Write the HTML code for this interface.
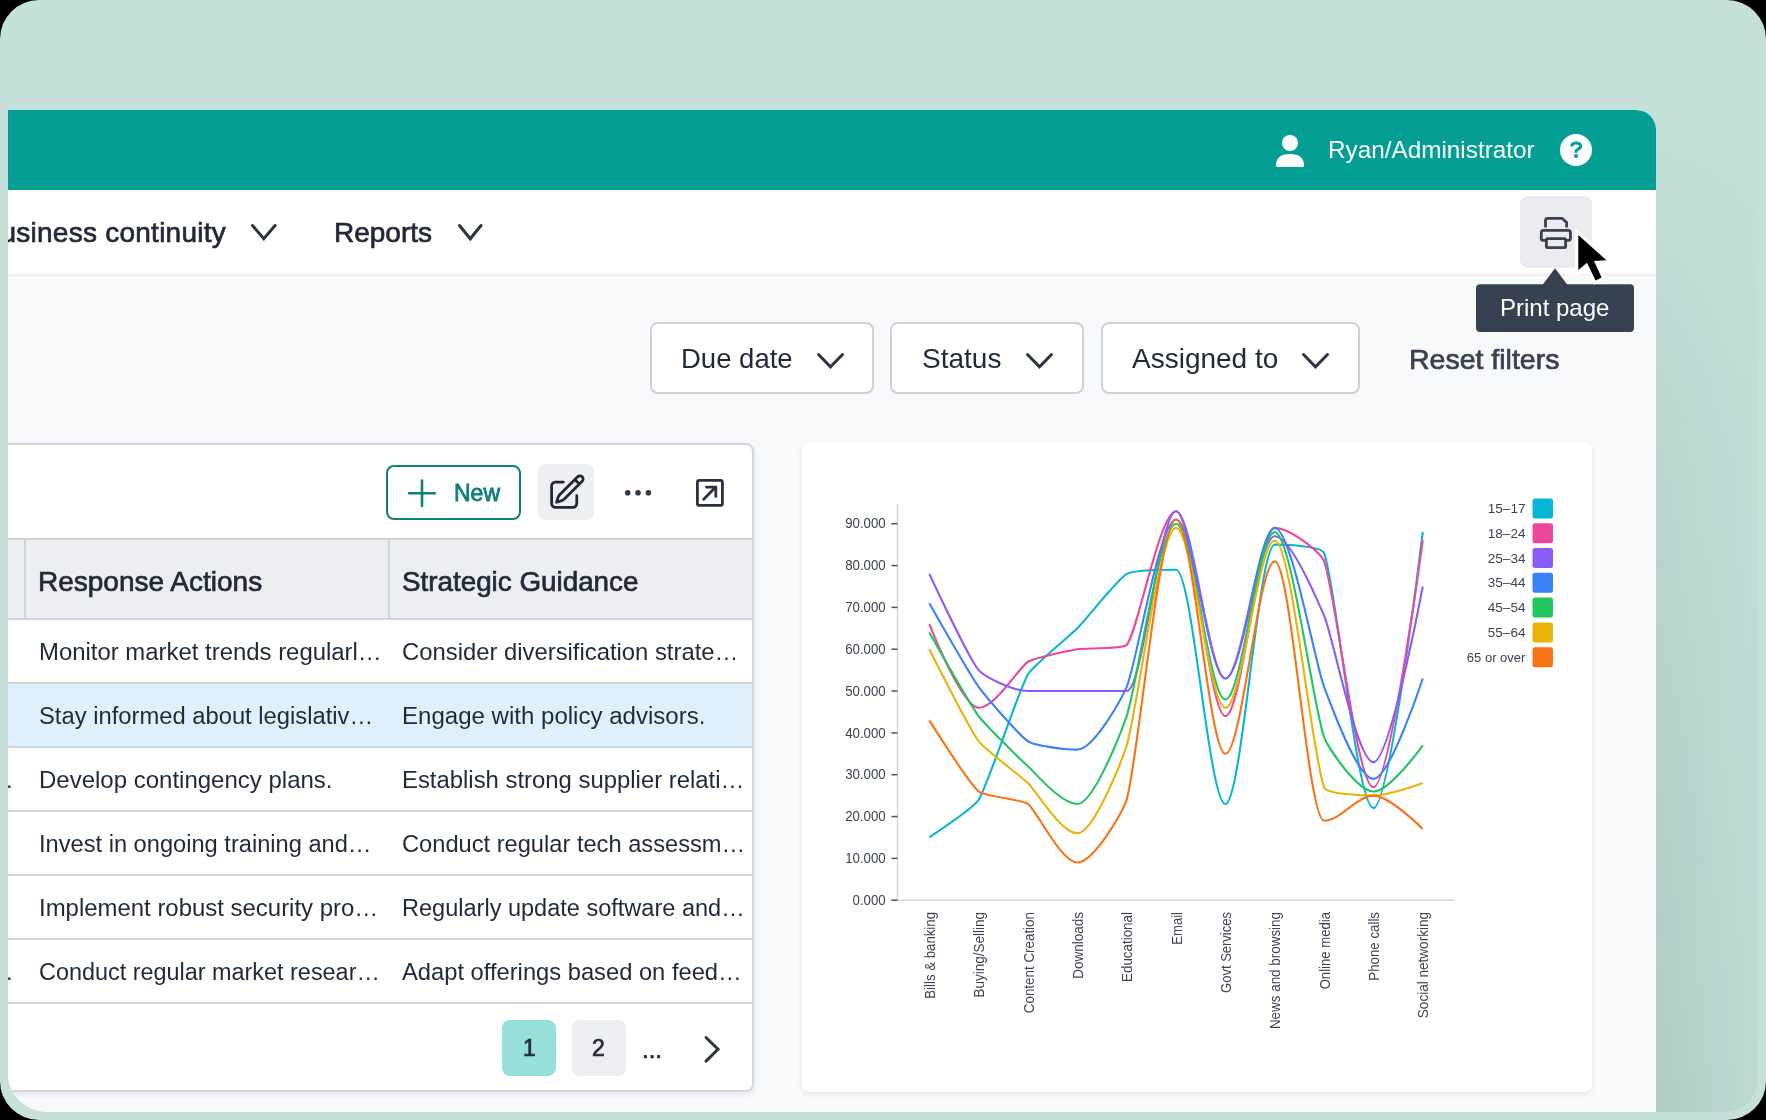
<!DOCTYPE html>
<html><head><meta charset="utf-8"><style>
html,body{margin:0;padding:0;background:#000;width:1766px;height:1120px;overflow:hidden}
.frame{position:absolute;left:0;top:0;width:1766px;height:1120px;border-radius:39px;background:#c5e1da;overflow:hidden}
.shadow{position:absolute;left:1656px;top:110px;width:102px;height:1002px;border-bottom-right-radius:32px;background:linear-gradient(to right,rgba(10,40,30,0.10),rgba(10,40,30,0.035));-webkit-mask-image:linear-gradient(to bottom,rgba(0,0,0,0) 0%,rgba(0,0,0,0.55) 35%,#000 100%);mask-image:linear-gradient(to bottom,rgba(0,0,0,0) 0%,rgba(0,0,0,0.55) 35%,#000 100%)}
.app{position:absolute;left:0;top:0;width:1766px;height:1120px;clip-path:inset(110px 110px 8px 8px round 0 20px 0 38px);background:#f8f9fb}
.t{position:absolute;white-space:nowrap;font-family:"Liberation Sans", sans-serif;will-change:transform}
.med{-webkit-text-stroke:0.7px currentColor}
.b{position:absolute}
.s{position:absolute;overflow:visible}
</style></head><body>
<div class="frame"><div class="shadow"></div>
<div class="app">
<div class="b" style="left:0.00px;top:110.00px;width:1656.00px;height:80.00px;background:#049e95;"></div>
<svg class="s" style="left:1270px;top:130px" width="40" height="42" viewBox="1270 130 40 42"><circle cx="1290" cy="143" r="8" fill="#fff"/><path d="M1277.5 167 L1302.5 167 Q1304 167 1304 165.5 Q1304 154 1290 154 Q1276 154 1276 165.5 Q1276 167 1277.5 167Z" fill="#fff"/></svg>
<div class="t ryan" style="left:1328.20px;top:138.42px;font-size:24.30px;line-height:24.30px;color:#ffffff;font-weight:400;">Ryan/Administrator</div>
<svg class="s" style="left:1556px;top:130px" width="40" height="40" viewBox="1556 130 40 40"><circle cx="1576" cy="150" r="16" fill="#fff"/><path d="M1571.8 145.2 Q1572.8 143 1576.4 143 Q1580.6 143 1580.6 146.2 Q1580.6 148 1578.2 149.2 Q1575.9 150.3 1575.9 151.6" fill="none" stroke="#049e95" stroke-width="3" stroke-linecap="round"/><circle cx="1576" cy="156" r="2.1" fill="#049e95"/></svg>
<div class="b" style="left:0.00px;top:190.00px;width:1656.00px;height:84.00px;background:#fff;"></div>
<div class="b" style="left:0.00px;top:274.00px;width:1656.00px;height:2.00px;background:linear-gradient(#e6e8ec,#f8f9fb);"></div>
<div class="t med navtxt" style="left:225.50px;top:218.75px;font-size:28.00px;line-height:28.00px;color:#1f2937;font-weight:400;transform:translateX(-100%);letter-spacing:0.25px;">Business continuity</div>
<svg class="s" style="left:247.4px;top:220.3px" width="33.6" height="24.3" viewBox="247.4 220.3 33.6 24.3"><path d="M252.90 225.80 L264.20 239.10 L275.50 225.80" fill="none" stroke="#2b3440" stroke-width="3" stroke-linecap="round" stroke-linejoin="miter"/></svg>
<div class="t med" style="left:333.60px;top:218.75px;font-size:28.00px;line-height:28.00px;color:#1f2937;font-weight:400;">Reports</div>
<svg class="s" style="left:454.0px;top:220.3px" width="32.5" height="24.3" viewBox="454.0 220.3 32.5 24.3"><path d="M459.50 225.80 L470.25 239.10 L481.00 225.80" fill="none" stroke="#2b3440" stroke-width="3" stroke-linecap="round" stroke-linejoin="miter"/></svg>
<div class="b" style="left:1520.00px;top:196.00px;width:72.00px;height:72.00px;background:#ececf0;border-radius:8px;"></div>
<svg class="s" style="left:1535px;top:212px" width="42" height="42" viewBox="1535 212 42 42" fill="none" stroke="#374151" stroke-width="2.8" stroke-linejoin="round"><path d="M1545.5 227.5 V220.5 Q1545.5 218.4 1547.6 218.4 H1562.3 L1566.6 222.6 V227.5"/><path d="M1546 240.4 H1543.2 Q1541.3 240.4 1541.3 238.5 V232.5 Q1541.3 230.4 1543.4 230.4 H1568.3 Q1570.4 230.4 1570.4 232.5 V238.5 Q1570.4 240.4 1568.5 240.4 H1566"/><rect x="1546.4" y="238.6" width="19.2" height="9" rx="1.4"/></svg>
<div class="b" style="left:650.00px;top:322.00px;width:223.50px;height:71.50px;background:#fff;border:2px solid #cdd1d8;border-radius:8px;box-sizing:border-box;"></div><div class="t " style="left:681.30px;top:345.16px;font-size:27.50px;line-height:27.50px;color:#1f2937;font-weight:400;">Due date</div><svg class="s" style="left:812.5px;top:349.2px" width="35.0" height="23.3" viewBox="812.5 349.2 35.0 23.3"><path d="M818.00 354.70 L830.00 367.00 L842.00 354.70" fill="none" stroke="#2b3440" stroke-width="3" stroke-linecap="round" stroke-linejoin="miter"/></svg>
<div class="b" style="left:890.30px;top:322.00px;width:193.70px;height:71.50px;background:#fff;border:2px solid #cdd1d8;border-radius:8px;box-sizing:border-box;"></div><div class="t " style="left:922.00px;top:344.75px;font-size:28.00px;line-height:28.00px;color:#1f2937;font-weight:400;">Status</div><svg class="s" style="left:1022.4px;top:349.2px" width="35.0" height="23.3" viewBox="1022.4 349.2 35.0 23.3"><path d="M1027.90 354.70 L1039.90 367.00 L1051.90 354.70" fill="none" stroke="#2b3440" stroke-width="3" stroke-linecap="round" stroke-linejoin="miter"/></svg>
<div class="b" style="left:1100.50px;top:322.00px;width:259.00px;height:71.50px;background:#fff;border:2px solid #cdd1d8;border-radius:8px;box-sizing:border-box;"></div><div class="t " style="left:1132.40px;top:344.75px;font-size:28.00px;line-height:28.00px;color:#1f2937;font-weight:400;">Assigned to</div><svg class="s" style="left:1298.0px;top:349.2px" width="35.0" height="23.3" viewBox="1298.0 349.2 35.0 23.3"><path d="M1303.50 354.70 L1315.50 367.00 L1327.50 354.70" fill="none" stroke="#2b3440" stroke-width="3" stroke-linecap="round" stroke-linejoin="miter"/></svg>
<div class="t med" style="left:1408.50px;top:344.63px;font-size:28.50px;line-height:28.50px;color:#374151;font-weight:400;">Reset filters</div>
<div class="b" style="left:-10.00px;top:442.50px;width:764.00px;height:649.00px;background:#fff;border:2px solid #d3d6dc;border-radius:8px;box-sizing:border-box;box-shadow:0 2px 6px rgba(0,0,0,0.09);"></div>
<div class="b" style="left:386.30px;top:464.50px;width:135.20px;height:55.00px;border:2px solid #0f7f77;border-radius:8px;box-sizing:border-box;"></div>
<svg class="s" style="left:405px;top:476px" width="34" height="34" viewBox="405 476 34 34"><path d="M422 480.5 V506 M409.2 493.2 H434.8" stroke="#0f7f77" stroke-width="2.6" stroke-linecap="round"/></svg>
<div class="t " style="left:454.00px;top:481.90px;font-size:23.00px;line-height:23.00px;color:#0f7f77;font-weight:400;-webkit-text-stroke:0.8px #0f7f77;">New</div>
<div class="b" style="left:538.00px;top:464.00px;width:56.00px;height:56.00px;background:#eeeff2;border-radius:8px;"></div>
<svg class="s" style="left:0;top:0" width="1766" height="1120" viewBox="0 0 1766 1120"><g transform="translate(546.56 472) scale(1.68)" fill="none" stroke="#1f2937" stroke-width="1.65" stroke-linecap="round" stroke-linejoin="round"><path d="M16.862 4.487l1.687-1.688a1.875 1.875 0 112.652 2.652L10.582 16.07a4.5 4.5 0 01-1.897 1.13L6 18l.8-2.685a4.5 4.5 0 011.13-1.897l8.932-8.931zm0 0L19.5 7.125M18 14v4.75A2.25 2.25 0 0115.75 21H5.25A2.25 2.25 0 013 18.75V8.25A2.25 2.25 0 015.25 6H10"/></g></svg>
<svg class="s" style="left:620px;top:485px" width="36" height="16" viewBox="620 485 36 16" fill="#2f3845"><circle cx="627.7" cy="492.8" r="2.8"/><circle cx="638" cy="492.8" r="2.8"/><circle cx="648.4" cy="492.8" r="2.8"/></svg>
<svg class="s" style="left:690px;top:473px" width="40" height="40" viewBox="690 473 40 40" fill="none" stroke="#2a323f" stroke-width="2.8" stroke-linecap="round" stroke-linejoin="round"><rect x="697.4" y="480.4" width="25" height="25" rx="2"/><path d="M703.7 499.2 L715.8 487.1 M706.5 487.1 H715.8 V496.4"/></svg>
<div class="b" style="left:0.00px;top:538.00px;width:752.00px;height:82.00px;background:#edeef2;border-top:2px solid #cfd3da;border-bottom:2px solid #cfd3da;box-sizing:border-box;"></div>
<div class="b" style="left:24.00px;top:540.00px;width:2.00px;height:78.00px;background:#cfd3da;"></div>
<div class="b" style="left:388.00px;top:540.00px;width:2.00px;height:78.00px;background:#cfd3da;"></div>
<div class="t med" style="left:38.30px;top:567.95px;font-size:28.00px;line-height:28.00px;color:#1f2937;font-weight:400;">Response Actions</div>
<div class="t med" style="left:402.30px;top:568.11px;font-size:27.80px;line-height:27.80px;color:#1f2937;font-weight:400;">Strategic Guidance</div>
<div class="b" style="left:0.00px;top:682.00px;width:752.00px;height:2.00px;background:#cfd3da;"></div>
<div class="t " style="left:38.60px;top:640.33px;font-size:23.92px;line-height:23.92px;color:#1f2937;font-weight:400;">Monitor market trends regularl…</div>
<div class="t " style="left:402.00px;top:640.40px;font-size:23.84px;line-height:23.84px;color:#1f2937;font-weight:400;">Consider diversification strate…</div>
<div class="b" style="left:0.00px;top:684.00px;width:752.00px;height:62.00px;background:#dff0fc;"></div>
<div class="b" style="left:0.00px;top:746.00px;width:752.00px;height:2.00px;background:#cfd3da;"></div>
<div class="t " style="left:38.60px;top:704.46px;font-size:23.77px;line-height:23.77px;color:#1f2937;font-weight:400;">Stay informed about legislativ…</div>
<div class="t " style="left:402.00px;top:704.22px;font-size:24.06px;line-height:24.06px;color:#1f2937;font-weight:400;">Engage with policy advisors.</div>
<div class="b" style="left:0.00px;top:810.00px;width:752.00px;height:2.00px;background:#cfd3da;"></div>
<div class="t " style="left:38.60px;top:768.27px;font-size:24.00px;line-height:24.00px;color:#1f2937;font-weight:400;">Develop contingency plans.</div>
<div class="t " style="left:402.00px;top:768.37px;font-size:23.88px;line-height:23.88px;color:#1f2937;font-weight:400;">Establish strong supplier relati…</div>
<div class="t " style="left:6.00px;top:768.43px;font-size:23.80px;line-height:23.80px;color:#1f2937;font-weight:400;">.</div>
<div class="b" style="left:0.00px;top:874.00px;width:752.00px;height:2.00px;background:#cfd3da;"></div>
<div class="t " style="left:38.60px;top:832.56px;font-size:23.65px;line-height:23.65px;color:#1f2937;font-weight:400;">Invest in ongoing training and…</div>
<div class="t " style="left:402.00px;top:832.54px;font-size:23.67px;line-height:23.67px;color:#1f2937;font-weight:400;">Conduct regular tech assessm…</div>
<div class="b" style="left:0.00px;top:938.00px;width:752.00px;height:2.00px;background:#cfd3da;"></div>
<div class="t " style="left:38.60px;top:896.32px;font-size:23.94px;line-height:23.94px;color:#1f2937;font-weight:400;">Implement robust security pro…</div>
<div class="t " style="left:402.00px;top:896.65px;font-size:23.54px;line-height:23.54px;color:#1f2937;font-weight:400;">Regularly update software and…</div>
<div class="b" style="left:0.00px;top:1002.00px;width:752.00px;height:2.00px;background:#cfd3da;"></div>
<div class="t " style="left:38.60px;top:960.76px;font-size:23.41px;line-height:23.41px;color:#1f2937;font-weight:400;">Conduct regular market resear…</div>
<div class="t " style="left:402.00px;top:960.50px;font-size:23.72px;line-height:23.72px;color:#1f2937;font-weight:400;">Adapt offerings based on feed…</div>
<div class="t " style="left:6.00px;top:960.43px;font-size:23.80px;line-height:23.80px;color:#1f2937;font-weight:400;">.</div>
<div class="b" style="left:502.40px;top:1020.00px;width:53.60px;height:55.60px;background:#99dfda;border-radius:8px;"></div>
<div class="b" style="left:572.00px;top:1020.00px;width:53.80px;height:55.60px;background:#edeef2;border-radius:8px;"></div>
<div class="t med" style="left:522.50px;top:1037.20px;font-size:23.00px;line-height:23.00px;color:#1f2937;font-weight:400;">1</div>
<div class="t med" style="left:592.30px;top:1037.20px;font-size:23.00px;line-height:23.00px;color:#1f2937;font-weight:400;">2</div>
<div class="t med" style="left:642.00px;top:1037.57px;font-size:24.00px;line-height:24.00px;color:#1f2937;font-weight:400;">...</div>
<svg class="s" style="left:698px;top:1030px" width="28" height="40" viewBox="698 1030 28 40"><path d="M706 1037.5 L718 1049.3 L706 1061.1" fill="none" stroke="#2b3440" stroke-width="3" stroke-linecap="round" stroke-linejoin="miter"/></svg>
<div class="b" style="left:802.00px;top:442.00px;width:790.00px;height:650.00px;background:#fff;border-radius:8px;box-shadow:0 2px 6px rgba(0,0,0,0.08);"></div>
<svg class="s" style="left:0;top:0" width="1766" height="1120" viewBox="0 0 1766 1120" font-family='"Liberation Sans", sans-serif' font-size="14" fill="#3d4451"><path d="M897.5 504 V900.2 H1454.4" fill="none" stroke="#d3d6dc" stroke-width="1.5"/><path d="M891.5 900.20 H897.5" stroke="#4b5260" stroke-width="1.5"/><text transform="translate(885.7 900.20) scale(0.947 1)" text-anchor="end" dominant-baseline="central">0.000</text><path d="M891.5 858.37 H897.5" stroke="#4b5260" stroke-width="1.5"/><text transform="translate(885.7 858.37) scale(0.947 1)" text-anchor="end" dominant-baseline="central">10.000</text><path d="M891.5 816.54 H897.5" stroke="#4b5260" stroke-width="1.5"/><text transform="translate(885.7 816.54) scale(0.947 1)" text-anchor="end" dominant-baseline="central">20.000</text><path d="M891.5 774.71 H897.5" stroke="#4b5260" stroke-width="1.5"/><text transform="translate(885.7 774.71) scale(0.947 1)" text-anchor="end" dominant-baseline="central">30.000</text><path d="M891.5 732.88 H897.5" stroke="#4b5260" stroke-width="1.5"/><text transform="translate(885.7 732.88) scale(0.947 1)" text-anchor="end" dominant-baseline="central">40.000</text><path d="M891.5 691.05 H897.5" stroke="#4b5260" stroke-width="1.5"/><text transform="translate(885.7 691.05) scale(0.947 1)" text-anchor="end" dominant-baseline="central">50.000</text><path d="M891.5 649.22 H897.5" stroke="#4b5260" stroke-width="1.5"/><text transform="translate(885.7 649.22) scale(0.947 1)" text-anchor="end" dominant-baseline="central">60.000</text><path d="M891.5 607.39 H897.5" stroke="#4b5260" stroke-width="1.5"/><text transform="translate(885.7 607.39) scale(0.947 1)" text-anchor="end" dominant-baseline="central">70.000</text><path d="M891.5 565.56 H897.5" stroke="#4b5260" stroke-width="1.5"/><text transform="translate(885.7 565.56) scale(0.947 1)" text-anchor="end" dominant-baseline="central">80.000</text><path d="M891.5 523.73 H897.5" stroke="#4b5260" stroke-width="1.5"/><text transform="translate(885.7 523.73) scale(0.947 1)" text-anchor="end" dominant-baseline="central">90.000</text><text transform="translate(930.30 912) rotate(-90) scale(0.945 1)" text-anchor="end" dominant-baseline="central">Bills &amp; banking</text><text transform="translate(979.65 912) rotate(-90) scale(0.966 1)" text-anchor="end" dominant-baseline="central">Buying/Selling</text><text transform="translate(1029.00 912) rotate(-90) scale(0.958 1)" text-anchor="end" dominant-baseline="central">Content Creation</text><text transform="translate(1078.35 912) rotate(-90) scale(0.966 1)" text-anchor="end" dominant-baseline="central">Downloads</text><text transform="translate(1127.70 912) rotate(-90) scale(0.958 1)" text-anchor="end" dominant-baseline="central">Educational</text><text transform="translate(1177.05 912) rotate(-90) scale(0.935 1)" text-anchor="end" dominant-baseline="central">Email</text><text transform="translate(1226.40 912) rotate(-90) scale(0.930 1)" text-anchor="end" dominant-baseline="central">Govt Services</text><text transform="translate(1275.75 912) rotate(-90) scale(0.959 1)" text-anchor="end" dominant-baseline="central">News and browsing</text><text transform="translate(1325.10 912) rotate(-90) scale(0.939 1)" text-anchor="end" dominant-baseline="central">Online media</text><text transform="translate(1374.45 912) rotate(-90) scale(0.950 1)" text-anchor="end" dominant-baseline="central">Phone calls</text><text transform="translate(1423.80 912) rotate(-90) scale(0.969 1)" text-anchor="end" dominant-baseline="central">Social networking</text><rect x="1532.5" y="498.40" width="20.5" height="20" rx="2.5" fill="#06b6d4"/><text transform="translate(1525.4 508.40) scale(1 1)" text-anchor="end" dominant-baseline="central" font-size="13.5">15–17</text><rect x="1532.5" y="523.20" width="20.5" height="20" rx="2.5" fill="#ec4899"/><text transform="translate(1525.4 533.20) scale(1 1)" text-anchor="end" dominant-baseline="central" font-size="13.5">18–24</text><rect x="1532.5" y="548.00" width="20.5" height="20" rx="2.5" fill="#8b5cf6"/><text transform="translate(1525.4 558.00) scale(1 1)" text-anchor="end" dominant-baseline="central" font-size="13.5">25–34</text><rect x="1532.5" y="572.80" width="20.5" height="20" rx="2.5" fill="#3b82f6"/><text transform="translate(1525.4 582.80) scale(1 1)" text-anchor="end" dominant-baseline="central" font-size="13.5">35–44</text><rect x="1532.5" y="597.60" width="20.5" height="20" rx="2.5" fill="#22c55e"/><text transform="translate(1525.4 607.60) scale(1 1)" text-anchor="end" dominant-baseline="central" font-size="13.5">45–54</text><rect x="1532.5" y="622.40" width="20.5" height="20" rx="2.5" fill="#eab308"/><text transform="translate(1525.4 632.40) scale(1 1)" text-anchor="end" dominant-baseline="central" font-size="13.5">55–64</text><rect x="1532.5" y="647.20" width="20.5" height="20" rx="2.5" fill="#f97316"/><text transform="translate(1525.4 657.20) scale(0.965 1)" text-anchor="end" dominant-baseline="central" font-size="13.5">65 or over</text><g fill="none" stroke-width="2.1" stroke-linecap="butt" stroke-linejoin="round"><path d="M929.30 837.46C929.30 837.46 973.98 807.52 978.65 799.81C988.79 783.05 1018.13 691.46 1028.00 674.32C1032.94 665.74 1070.26 635.52 1077.35 628.31C1085.07 620.46 1117.86 579.17 1126.70 573.93C1132.66 570.39 1159.60 569.74 1176.05 569.74C1192.50 569.74 1208.95 803.99 1225.40 803.99C1241.85 803.99 1258.30 544.64 1274.75 544.64C1291.20 544.64 1321.71 546.63 1324.10 553.01C1336.51 586.16 1357.00 808.17 1373.45 808.17C1389.90 808.17 1422.80 532.10 1422.80 532.10" stroke="#06b6d4"/>
<path d="M929.30 624.12C929.30 624.12 962.20 707.78 978.65 707.78C995.10 707.78 1019.56 666.78 1028.00 661.77C1034.37 657.99 1069.84 650.49 1077.35 649.22C1084.65 647.98 1122.88 649.22 1126.70 645.04C1137.69 632.99 1159.60 511.18 1176.05 511.18C1192.50 511.18 1208.95 716.15 1225.40 716.15C1241.85 716.15 1258.30 527.91 1274.75 527.91C1291.20 527.91 1321.06 553.40 1324.10 561.38C1335.87 592.30 1357.00 787.26 1373.45 787.26C1389.90 787.26 1422.80 540.46 1422.80 540.46" stroke="#ec4899"/>
<path d="M929.30 603.21C929.30 603.21 970.22 675.08 978.65 686.87C985.02 695.78 1019.20 735.65 1028.00 741.25C1034.00 745.06 1060.90 749.61 1077.35 749.61C1093.80 749.61 1122.05 697.70 1126.70 686.87C1136.86 663.19 1159.60 519.55 1176.05 519.55C1192.50 519.55 1208.95 678.50 1225.40 678.50C1241.85 678.50 1258.30 527.91 1274.75 527.91C1291.20 527.91 1315.00 663.73 1324.10 686.87C1329.81 701.38 1357.00 778.89 1373.45 778.89C1389.90 778.89 1422.80 678.50 1422.80 678.50" stroke="#3b82f6"/>
<path d="M929.30 573.93C929.30 573.93 968.75 658.39 978.65 670.13C983.56 675.96 1011.55 691.05 1028.00 691.05C1044.45 691.05 1060.90 691.05 1077.35 691.05C1093.80 691.05 1110.25 691.05 1126.70 691.05C1143.15 691.05 1159.60 511.18 1176.05 511.18C1192.50 511.18 1208.95 678.50 1225.40 678.50C1241.85 678.50 1258.30 536.28 1274.75 536.28C1291.20 536.28 1318.52 602.98 1324.10 615.76C1333.32 636.86 1357.00 762.16 1373.45 762.16C1389.90 762.16 1422.80 586.48 1422.80 586.48" stroke="#8b5cf6"/>
<path d="M929.30 632.49C929.30 632.49 970.07 704.51 978.65 716.15C984.87 724.58 1020.13 759.34 1028.00 766.34C1034.94 772.52 1060.90 803.99 1077.35 803.99C1093.80 803.99 1121.72 730.30 1126.70 716.15C1136.52 688.26 1159.60 523.73 1176.05 523.73C1192.50 523.73 1208.95 699.42 1225.40 699.42C1241.85 699.42 1258.30 532.10 1274.75 532.10C1291.20 532.10 1313.12 708.21 1324.10 737.06C1327.92 747.11 1357.00 791.44 1373.45 791.44C1389.90 791.44 1422.80 745.43 1422.80 745.43" stroke="#22c55e"/>
<path d="M929.30 649.22C929.30 649.22 969.51 728.85 978.65 741.25C984.31 748.93 1020.91 776.47 1028.00 783.08C1035.71 790.27 1060.90 833.27 1077.35 833.27C1093.80 833.27 1122.09 759.68 1126.70 745.43C1136.90 713.88 1159.60 527.91 1176.05 527.91C1192.50 527.91 1208.95 707.78 1225.40 707.78C1241.85 707.78 1258.30 540.46 1274.75 540.46C1291.20 540.46 1311.75 755.33 1324.10 787.26C1326.56 793.61 1357.00 795.62 1373.45 795.62C1389.90 795.62 1422.80 783.08 1422.80 783.08" stroke="#eab308"/>
<path d="M929.30 720.33C929.30 720.33 969.33 783.54 978.65 791.44C984.13 796.09 1022.09 799.73 1028.00 803.99C1036.89 810.40 1060.90 862.55 1077.35 862.55C1093.80 862.55 1123.46 811.08 1126.70 799.81C1138.26 759.63 1159.60 519.55 1176.05 519.55C1192.50 519.55 1208.95 753.80 1225.40 753.80C1241.85 753.80 1258.30 561.38 1274.75 561.38C1291.20 561.38 1307.65 820.72 1324.10 820.72C1340.55 820.72 1357.00 795.62 1373.45 795.62C1389.90 795.62 1422.80 829.09 1422.80 829.09" stroke="#f97316"/></g></svg>
<svg class="s" style="left:1470px;top:262px" width="170" height="76" viewBox="1470 262 170 76"><path d="M1555 268.3 L1567 284.2 H1630 Q1634 284.2 1634 288.2 V328 Q1634 332 1630 332 H1480 Q1476 332 1476 328 V288.2 Q1476 284.2 1480 284.2 H1543 Z" fill="#374151"/></svg>
<div class="t " style="left:1499.80px;top:296.07px;font-size:24.00px;line-height:24.00px;color:#ffffff;font-weight:400;">Print page</div>
<svg class="s" style="left:1565px;top:220px" width="55" height="70" viewBox="1565 220 55 70"><path d="M1578.3 235 V270 L1587 262.7 L1595.6 280.5 L1601.6 277.6 L1594 261.1 L1606.4 260.3 Z" fill="#000" stroke="#fff" stroke-width="6.5" stroke-linejoin="miter" stroke-miterlimit="10" paint-order="stroke"/></svg>
</div></div>
</body></html>
